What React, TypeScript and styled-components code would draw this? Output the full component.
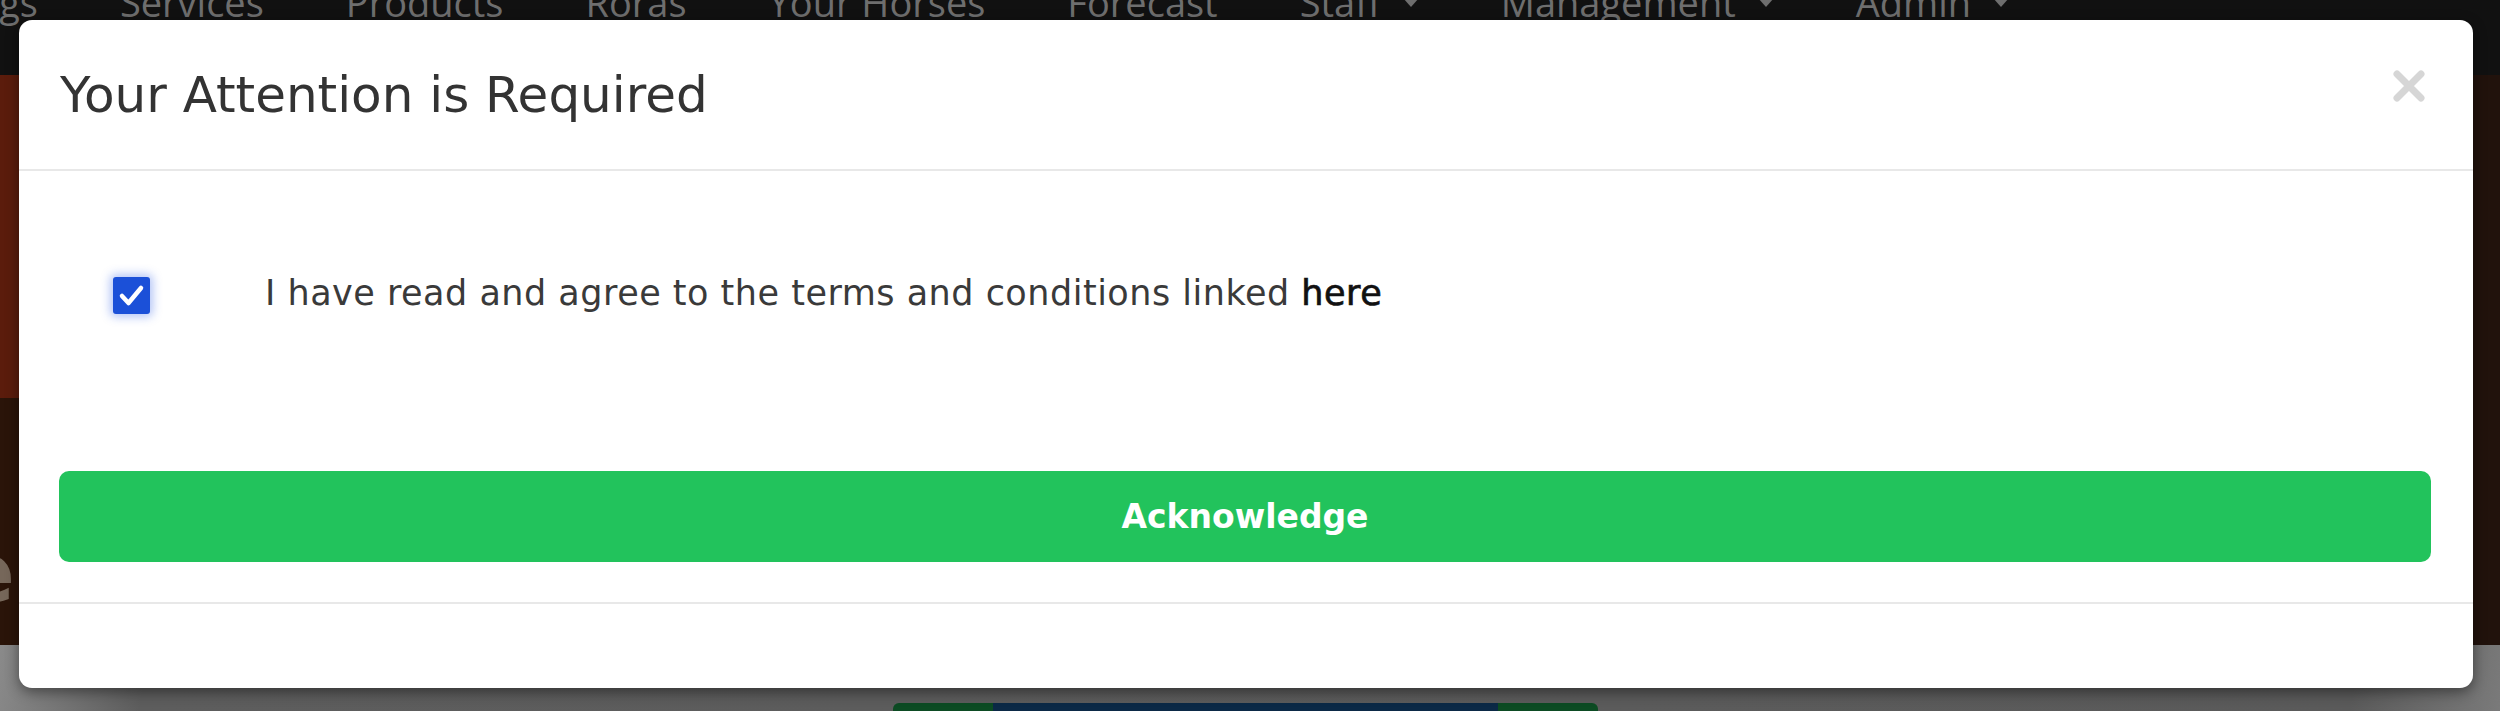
import styled, { createGlobalStyle } from 'styled-components';

const GlobalStyle = createGlobalStyle`
    html, body {
        margin: 0;
        padding: 0;
        width: 2500px;
        height: 711px;
        overflow: hidden;
        background: #5c5c5c;
        font-family: 'DejaVu Sans', Verdana, sans-serif;
    }
`;

const NAV_ITEMS = [
    { label: 'Bookings', caret: false },
    { label: 'Services', caret: false },
    { label: 'Products', caret: false },
    { label: 'Roras', caret: false },
    { label: 'Your Horses', caret: false },
    { label: 'Forecast', caret: false },
    { label: 'Staff', caret: true },
    { label: 'Management', caret: true },
    { label: 'Admin', caret: true },
];

export default function App() {
    return (
        <>
            <GlobalStyle />
            <Page>
                <NavBar>
                    <NavList>
                        {NAV_ITEMS.map((item) => (
                            <NavItem key={item.label}>
                                {item.label}
                                {item.caret && <Caret />}
                            </NavItem>
                        ))}
                    </NavList>
                </NavBar>
                <Hero>
                    <HeroStrip>
                        <HeroBand $color="#5b1c0c" $height={323} />
                        <HeroBand $color="#2a1409" $height={247}>
                            <HeroWord>Welcome</HeroWord>
                        </HeroBand>
                    </HeroStrip>
                    <HeroMiddle />
                    <HeroRight />
                </Hero>
                <Lower>
                    <Tabs>
                        <TabPiece $color="#0c4b23" $width={100} />
                        <TabPiece $color="#0b2946" $width={505} />
                        <TabPiece $color="#0c4b23" $width={100} />
                    </Tabs>
                </Lower>
            </Page>

            <Modal>
                <ModalHeader>
                    <ModalTitle>Your Attention is Required</ModalTitle>
                    <CloseButton aria-label="Close">
                        <svg width="34" height="34" viewBox="0 0 34 34">
                            <path
                                d="M5 5 L29 29 M29 5 L5 29"
                                stroke="#d6d6d6"
                                strokeWidth="7"
                                strokeLinecap="round"
                            />
                        </svg>
                    </CloseButton>
                </ModalHeader>
                <ModalBody>
                    <AgreeRow>
                        <CheckBox>
                            <svg width="37" height="37" viewBox="0 0 37 37">
                                <path
                                    d="M9 19 L15.5 26 L28 11"
                                    fill="none"
                                    stroke="#fff"
                                    strokeWidth="4.5"
                                    strokeLinecap="round"
                                    strokeLinejoin="round"
                                />
                            </svg>
                        </CheckBox>
                        <AgreeText>
                            I have read and agree to the terms and conditions linked{' '}
                            <TermsLink href="#">here</TermsLink>
                        </AgreeText>
                    </AgreeRow>
                    <AcknowledgeButton>Acknowledge</AcknowledgeButton>
                </ModalBody>
                <ModalFooter />
            </Modal>
        </>
    );
}

const Page = styled.div`
    width: 2500px;
    height: 711px;
    display: flex;
    flex-direction: column;
`;

const NavBar = styled.div`
    height: 75px;
    background: #111111;
    overflow: hidden;
`;

const NavList = styled.div`
    display: flex;
    gap: 82px;
    margin-top: -17px;
    margin-left: -124px;
`;

const NavItem = styled.div`
    display: flex;
    align-items: center;
    gap: 22px;
    font-family: 'Open Sans', sans-serif;
    font-size: 38px;
    line-height: 38px;
    color: #6e6e6e;
    white-space: nowrap;
`;

const Caret = styled.span`
    width: 0;
    height: 0;
    border-left: 8px solid transparent;
    border-right: 8px solid transparent;
    border-top: 9px solid #6e6e6e;
`;

const Hero = styled.div`
    height: 570px;
    display: grid;
    grid-template-columns: 19px 1fr 27px;
`;

const HeroStrip = styled.div`
    display: flex;
    flex-direction: column;
    overflow: hidden;
`;

const HeroBand = styled.div<{ $color: string; $height: number }>`
    height: ${(p) => p.$height}px;
    background: ${(p) => p.$color};
    display: flex;
    justify-content: flex-end;
    align-items: flex-end;
    padding-bottom: 30px;
    box-sizing: border-box;
`;

const HeroWord = styled.div`
    font-family: 'DejaVu Sans', sans-serif;
    font-weight: bold;
    font-size: 84px;
    line-height: 84px;
    color: #76675a;
    margin-right: 4px;
    white-space: nowrap;
`;

const HeroMiddle = styled.div`
    background: #2a1409;
`;

const HeroRight = styled.div`
    background: #21120c;
`;

const Lower = styled.div`
    flex: 1;
    background: linear-gradient(100deg, #8a8a8a 0%, #5d5d5d 6%, #5a5a5a 94%, #7a7a7a 100%);
    display: flex;
    justify-content: center;
    align-items: flex-end;
`;

const Tabs = styled.div`
    display: flex;
    height: 8px;
    margin-left: -9px;
    border-radius: 6px 6px 0 0;
    overflow: hidden;
`;

const TabPiece = styled.div<{ $color: string; $width: number }>`
    width: ${(p) => p.$width}px;
    background: ${(p) => p.$color};
`;

const Modal = styled.div`
    position: absolute;
    top: 20px;
    left: 19px;
    width: 2454px;
    height: 668px;
    background: #ffffff;
    border-radius: 13px;
    box-shadow: 0 4px 14px rgba(0, 0, 0, 0.45);
    display: flex;
    flex-direction: column;
`;

const ModalHeader = styled.div`
    height: 151px;
    box-sizing: border-box;
    padding: 46px 47px 0 41px;
    border-bottom: 2px solid #e8e8e8;
    display: flex;
    justify-content: space-between;
    align-items: flex-start;
`;

const ModalTitle = styled.h4`
    margin: 0;
    font-family: 'DejaVu Sans', Verdana, sans-serif;
    font-weight: normal;
    font-size: 50px;
    line-height: 59px;
    color: #333333;
`;

const CloseButton = styled.button`
    border: none;
    background: none;
    padding: 0;
    margin-top: 3px;
    width: 34px;
    height: 34px;
    cursor: pointer;
    display: flex;
`;

const ModalBody = styled.div`
    padding: 0 42px 40px 40px;
    display: flex;
    flex-direction: column;
`;

const AgreeRow = styled.div`
    margin-top: 106px;
    padding-left: 54px;
    display: flex;
    align-items: flex-start;
    gap: 115px;
`;

const CheckBox = styled.div`
    width: 37px;
    height: 37px;
    flex-shrink: 0;
    background: #1b50d8;
    border-radius: 3px;
    box-shadow: 0 0 10px 3px rgba(40, 90, 230, 0.35);
    display: flex;
`;

const AgreeText = styled.label`
    font-family: 'DejaVu Sans', Verdana, sans-serif;
    font-size: 35px;
    letter-spacing: 0.5px;
    line-height: 37px;
    margin-top: -2px;
    color: #3a3a3a;
    white-space: nowrap;
`;

const TermsLink = styled.a`
    color: #111111;
    -webkit-text-stroke: 0.7px #111111;
    text-decoration: none;
`;

const AcknowledgeButton = styled.button`
    margin-top: 157px;
    height: 91px;
    width: 100%;
    border: none;
    border-radius: 10px;
    background: #22c35c;
    color: #ffffff;
    font-family: 'DejaVu Sans', Verdana, sans-serif;
    font-weight: bold;
    font-size: 33px;
    cursor: pointer;
`;

const ModalFooter = styled.div`
    border-top: 2px solid #e8e8e8;
    flex: 1;
`;
